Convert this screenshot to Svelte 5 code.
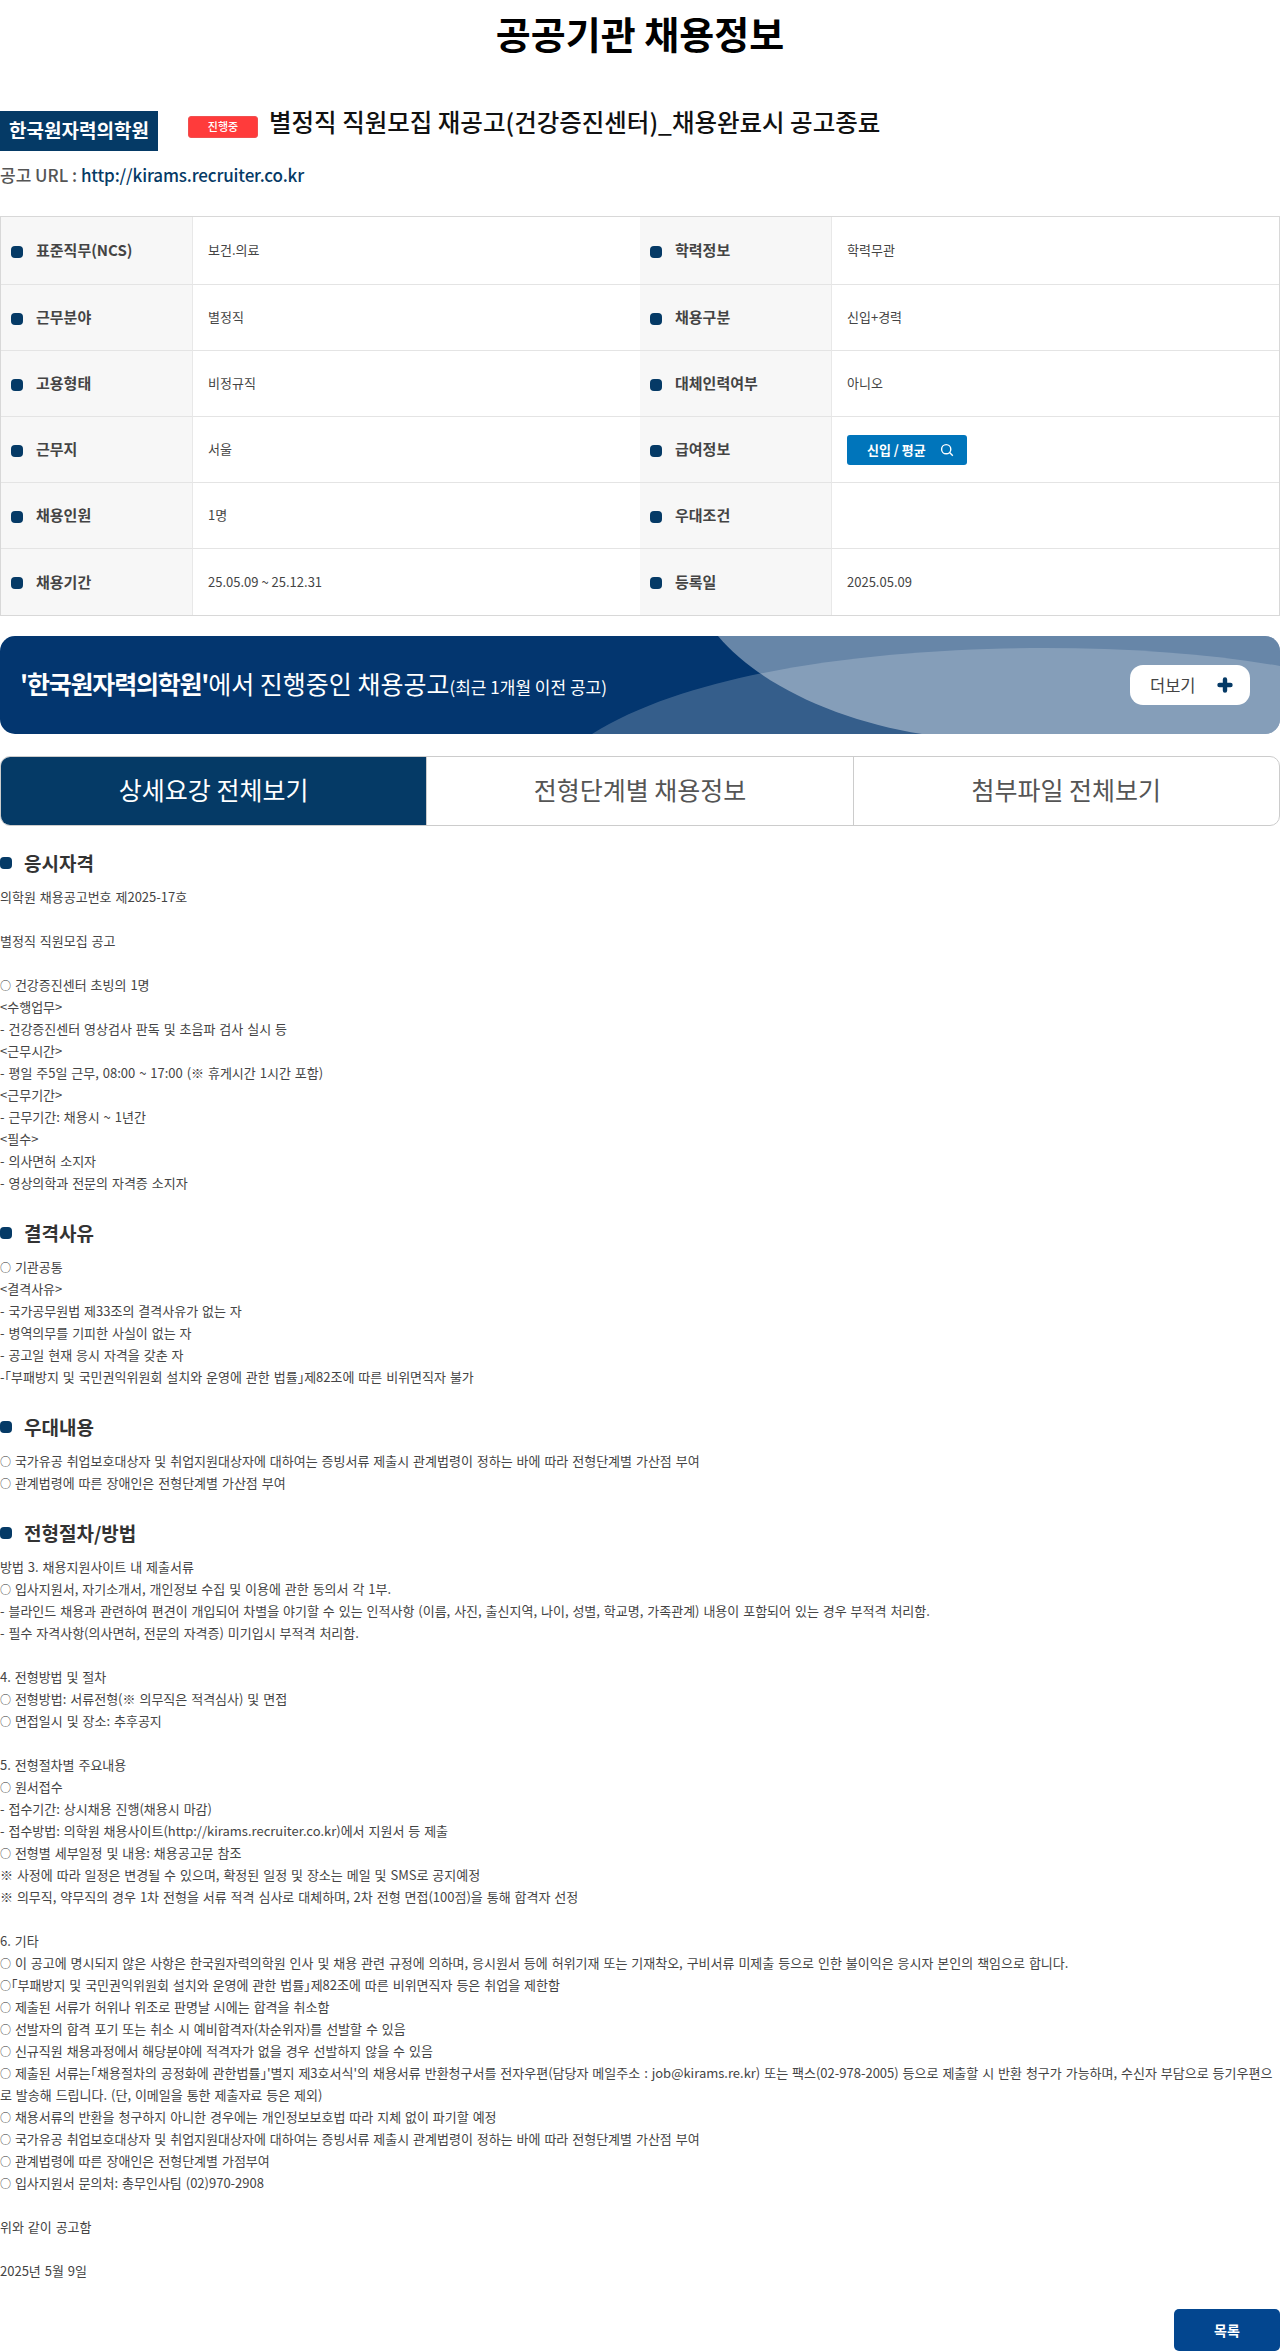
<script>
  const rows = [
    ['표준직무(NCS)', '보건.의료', '학력정보', '학력무관'],
    ['근무분야', '별정직', '채용구분', '신입+경력'],
    ['고용형태', '비정규직', '대체인력여부', '아니오'],
    ['근무지', '서울', '급여정보', null],
    ['채용인원', '1명', '우대조건', ''],
    ['채용기간', '25.05.09 ~ 25.12.31', '등록일', '2025.05.09']
  ];

  const tabs = ['상세요강 전체보기', '전형단계별 채용정보', '첨부파일 전체보기'];

  const sections = [
    {
      title: '응시자격',
      text: `의학원 채용공고번호 제2025-17호

별정직 직원모집 공고

○ 건강증진센터 초빙의 1명
<수행업무>
- 건강증진센터 영상검사 판독 및 초음파 검사 실시 등
<근무시간>
- 평일 주5일 근무, 08:00 ~ 17:00 (※ 휴게시간 1시간 포함)
<근무기간>
- 근무기간: 채용시 ~ 1년간
<필수>
- 의사면허 소지자
- 영상의학과 전문의 자격증 소지자`
    },
    {
      title: '결격사유',
      text: `○ 기관공통
<결격사유>
- 국가공무원법 제33조의 결격사유가 없는 자
- 병역의무를 기피한 사실이 없는 자
- 공고일 현재 응시 자격을 갖춘 자
-「부패방지 및 국민권익위원회 설치와 운영에 관한 법률」제82조에 따른 비위면직자 불가`
    },
    {
      title: '우대내용',
      text: `○ 국가유공 취업보호대상자 및 취업지원대상자에 대하여는 증빙서류 제출시 관계법령이 정하는 바에 따라 전형단계별 가산점 부여
○ 관계법령에 따른 장애인은 전형단계별 가산점 부여`
    },
    {
      title: '전형절차/방법',
      text: `방법 3. 채용지원사이트 내 제출서류
○ 입사지원서, 자기소개서, 개인정보 수집 및 이용에 관한 동의서 각 1부.
- 블라인드 채용과 관련하여 편견이 개입되어 차별을 야기할 수 있는 인적사항 (이름, 사진, 출신지역, 나이, 성별, 학교명, 가족관계) 내용이 포함되어 있는 경우 부적격 처리함.
- 필수 자격사항(의사면허, 전문의 자격증) 미기입시 부적격 처리함.

4. 전형방법 및 절차
○ 전형방법: 서류전형(※ 의무직은 적격심사) 및 면접
○ 면접일시 및 장소: 추후공지

5. 전형절차별 주요내용
○ 원서접수
- 접수기간: 상시채용 진행(채용시 마감)
- 접수방법: 의학원 채용사이트(http://kirams.recruiter.co.kr)에서 지원서 등 제출
○ 전형별 세부일정 및 내용: 채용공고문 참조
※ 사정에 따라 일정은 변경될 수 있으며, 확정된 일정 및 장소는 메일 및 SMS로 공지예정
※ 의무직, 약무직의 경우 1차 전형을 서류 적격 심사로 대체하며, 2차 전형 면접(100점)을 통해 합격자 선정

6. 기타
○ 이 공고에 명시되지 않은 사항은 한국원자력의학원 인사 및 채용 관련 규정에 의하며, 응시원서 등에 허위기재 또는 기재착오, 구비서류 미제출 등으로 인한 불이익은 응시자 본인의 책임으로 합니다.
○「부패방지 및 국민권익위원회 설치와 운영에 관한 법률」제82조에 따른 비위면직자 등은 취업을 제한함
○ 제출된 서류가 허위나 위조로 판명날 시에는 합격을 취소함
○ 선발자의 합격 포기 또는 취소 시 예비합격자(차순위자)를 선발할 수 있음
○ 신규직원 채용과정에서 해당분야에 적격자가 없을 경우 선발하지 않을 수 있음
○ 제출된 서류는「채용절차의 공정화에 관한법률」'별지 제3호서식'의 채용서류 반환청구서를 전자우편(담당자 메일주소 : job@kirams.re.kr) 또는 팩스(02-978-2005) 등으로 제출할 시 반환 청구가 가능하며, 수신자 부담으로 등기우편으
로 발송해 드립니다. (단, 이메일을 통한 제출자료 등은 제외)
○ 채용서류의 반환을 청구하지 아니한 경우에는 개인정보보호법 따라 지체 없이 파기할 예정
○ 국가유공 취업보호대상자 및 취업지원대상자에 대하여는 증빙서류 제출시 관계법령이 정하는 바에 따라 전형단계별 가산점 부여
○ 관계법령에 따른 장애인은 전형단계별 가점부여
○ 입사지원서 문의처: 총무인사팀 (02)970-2908

위와 같이 공고함

2025년 5월 9일`
    }
  ];

  // the ring and the corner brackets are narrower in the original font
  const tokens = (line) => line.split(/(○|「|」)/).filter(Boolean);
  const tokenClass = { '○': 'ring', '「': 'bracket', '」': 'bracket' };
</script>

<main>
  <h1>공공기관 채용정보</h1>

  <div class="head">
    <span class="org">한국원자력의학원</span>
    <span class="status">진행중</span>
    <h2>별정직 직원모집 재공고(건강증진센터)_채용완료시 공고종료</h2>
  </div>
  <p class="url">공고 URL : <a href="#top">http://kirams.recruiter.co.kr</a></p>

  <div class="info">
    {#each rows as row, r}
      <div class="info__label" class:last={r === 5}><i class="dot"></i>{row[0]}</div>
      <div class="info__value" class:last={r === 5}>{row[1]}</div>
      <div class="info__label" class:last={r === 5}><i class="dot"></i>{row[2]}</div>
      <div class="info__value" class:last={r === 5}>
        {#if row[3] === null}
          <button class="salary">
            신입 / 평균
            <svg width="14" height="14" viewBox="0 0 14 14" fill="none" stroke="#fff" stroke-width="1.4">
              <circle cx="6.2" cy="6.2" r="4.6" />
              <path d="M9.6 9.6 L12.8 12.8" />
            </svg>
          </button>
        {:else}
          {row[3]}
        {/if}
      </div>
    {/each}
  </div>

  <div class="banner">
    <svg class="banner__bg" viewBox="0 0 1280 98" preserveAspectRatio="none">
      <path d="M718 0 C760 50 840 85 922 98 L1280 98 L1280 0 Z" fill="#fff" fill-opacity="0.4" />
      <path d="M592 98 C700 30 900 12 1045 12 C1130 12 1210 18 1280 30 L1280 98 Z" fill="#fff" fill-opacity="0.2" />
    </svg>
    <p class="banner__text"><b>'한국원자력의학원'</b>에서 진행중인 채용공고<small>(최근 1개월 이전 공고)</small></p>
    <button class="more">
      더보기
      <svg width="16" height="16" viewBox="0 0 16 16" fill="none" stroke="#053a66" stroke-width="4.4" stroke-linecap="round">
        <path d="M8 2.5 V13.5 M2.5 8 H13.5" />
      </svg>
    </button>
  </div>

  <div class="tabs">
    {#each tabs as tab, i}
      <div class="tab" class:tab--on={i === 0}>{tab}</div>
    {/each}
  </div>

  {#each sections as section}
    <section>
      <h3><i class="dot dot--h"></i>{section.title}</h3>
      {#each section.text.split('\n') as line}
        <div class="line">{#each tokens(line) as t}{#if tokenClass[t]}<span class={tokenClass[t]}>{t}</span>{:else}{t}{/if}{/each}</div>
      {/each}
    </section>
  {/each}

  <div class="foot">
    <button class="list">목록</button>
  </div>
</main>

<style>
  :global(body) {
    margin: 0;
    background: #fff;
    font-family: "Noto Sans CJK KR", "Noto Sans", sans-serif;
  }

  main {
    width: 1280px;
    height: 2351px;
    display: flex;
    flex-direction: column;
    color: #444;
  }

  h1 {
    margin: 0;
    height: 70px;
    line-height: 66px;
    font-size: 38px;
    font-weight: 700;
    color: #000;
    text-align: center;
  }

  .head {
    margin-top: 41px;
    height: 40px;
    display: flex;
    align-items: flex-start;
  }

  .org {
    width: 158px;
    height: 40px;
    line-height: 38px;
    background: #053a66;
    color: #fff;
    font-size: 19px;
    font-weight: 700;
    text-align: center;
  }

  .status {
    box-sizing: border-box;
    width: 70px;
    height: 22px;
    margin: 5px 11px 0 30px;
    line-height: 19px;
    border: 1px solid #f05050;
    border-radius: 3px;
    background: #ff3b3b;
    color: #fff;
    font-size: 11px;
    font-weight: 500;
    text-align: center;
  }

  h2 {
    margin: -9px 0 0;
    line-height: 40px;
    font-size: 24.5px;
    font-weight: 500;
    color: #111;
  }

  .url {
    margin: 10px 0 0;
    height: 55px;
    line-height: 28px;
    font-size: 17px;
    font-weight: 500;
    color: #555;
  }

  .url a {
    color: #053a66;
    text-decoration: none;
    letter-spacing: -0.15px;
  }

  .info {
    height: 400px;
    box-sizing: border-box;
    display: grid;
    grid-template-columns: 192px 447px 192px 447px;
    grid-template-rows: 68px repeat(5, 66px);
    border: 1px solid #d8d8d8;
  }

  .info__label {
    display: flex;
    align-items: center;
    padding-bottom: 2px;
    background: #f7f7f7;
    font-size: 15px;
    font-weight: 700;
    border-bottom: 1px solid #e4e4e4;
    border-right: 1px solid #e8e8e8;
  }

  .info__value {
    display: flex;
    align-items: center;
    padding: 0 0 2px 15px;
    font-size: 13px;
    border-bottom: 1px solid #e4e4e4;
  }

  .last {
    border-bottom: 0;
  }

  .dot {
    display: block;
    flex: none;
    width: 12px;
    height: 12px;
    margin: 4px 13px 0 10px;
    border-radius: 4px;
    background: #053a66;
  }

  .dot--h {
    margin: 2px 12px 0 0;
  }

  .salary {
    width: 120px;
    height: 30px;
    margin-top: 2px;
    display: flex;
    align-items: center;
    justify-content: space-between;
    padding: 0 13px 0 20px;
    border: 0;
    border-radius: 3px;
    background: #0075bb;
    color: #fff;
    font: 700 13px "Noto Sans CJK KR", sans-serif;
  }

  .banner {
    position: relative;
    overflow: hidden;
    height: 98px;
    margin-top: 20px;
    display: flex;
    align-items: center;
    justify-content: space-between;
    padding: 0 30px 0 20px;
    border-radius: 15px;
    background: #03366f;
    color: #fff;
  }

  .banner__bg {
    position: absolute;
    inset: 0;
    width: 100%;
    height: 100%;
  }

  .banner__text {
    position: relative;
    margin: -5px 0 0;
    font-size: 25px;
  }

  .banner__text b {
    letter-spacing: -1.2px;
  }

  .banner__text small {
    font-size: 17px;
  }

  .more {
    position: relative;
    width: 120px;
    height: 40px;
    display: flex;
    align-items: center;
    justify-content: space-between;
    padding: 0 17px 0 20px;
    border: 0;
    border-radius: 13px;
    background: #fff;
    color: #444;
    font: 400 16.5px "Noto Sans CJK KR", sans-serif;
  }

  .tabs {
    margin-top: 22px;
    height: 70px;
    box-sizing: border-box;
    display: flex;
    overflow: hidden;
    border: 1px solid #ccc;
    border-radius: 10px;
  }

  .tab {
    flex: 1;
    display: flex;
    align-items: center;
    justify-content: center;
    padding-bottom: 4px;
    font-size: 25px;
    color: #555;
    border-left: 1px solid #ccc;
  }

  .tab:first-child {
    border-left: 0;
  }

  .tab--on {
    background: #053a66;
    color: #fff;
  }

  section {
    margin-top: 24px;
  }

  section:first-of-type {
    margin-top: 22px;
  }

  h3 {
    margin: 0 0 8px;
    padding-bottom: 2px;
    box-sizing: border-box;
    display: flex;
    align-items: center;
    height: 30px;
    font-size: 19px;
    font-weight: 700;
    color: #333;
  }

  .line {
    min-height: 22px;
    font-size: 13px;
    line-height: 22px;
    word-spacing: 1px;
    color: #444;
  }

  .ring {
    font-size: 11px;
    color: #333;
  }

  .bracket {
    font-feature-settings: "halt";
  }

  .foot {
    margin-top: auto;
    display: flex;
    justify-content: flex-end;
  }

  .list {
    width: 106px;
    height: 42px;
    border: 0;
    border-radius: 5px;
    background: #03468f;
    color: #fff;
    font: 700 14px "Noto Sans CJK KR", sans-serif;
  }
</style>
